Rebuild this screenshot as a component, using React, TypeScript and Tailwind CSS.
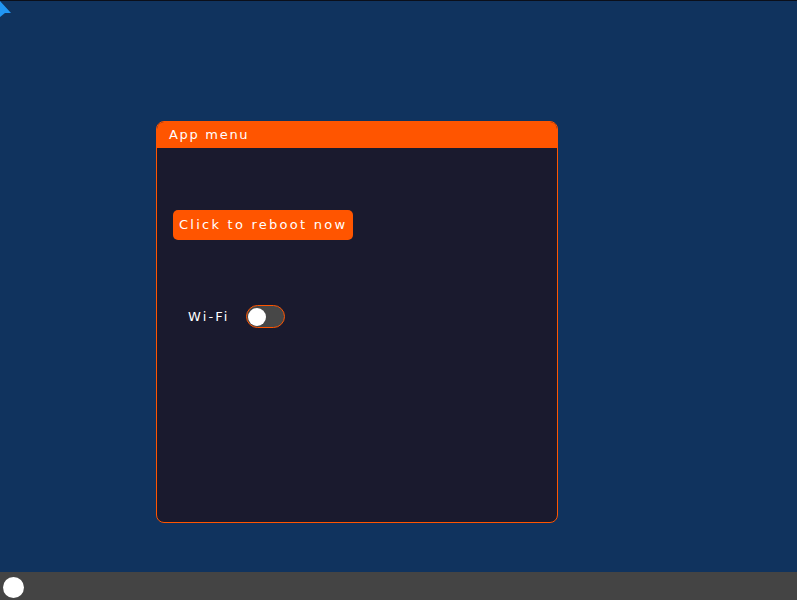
import React from "react";

export default function App() {
  const font = { fontFamily: '"DejaVu Sans", "Liberation Sans", sans-serif' };
  return (
    <div className="w-[797px] h-[600px] flex flex-col overflow-hidden bg-[#10335e]" style={font}>
      <div className="relative flex-1 border-t border-[#0b0f1a] pt-[120px] pl-[156px]">
        <svg className="absolute left-0 top-0" width="14" height="18" viewBox="0 0 14 18">
          <polygon points="0,0 11,12 5,12 0,16" fill="#2196f3" />
        </svg>
        <div className="w-[402px] h-[402px] rounded-[8px] border border-[#ff5500] bg-[#1a1a2e] flex flex-col overflow-hidden">
          <div className="h-[26px] bg-[#ff5500] flex items-center pl-[12px] text-white text-[13px] tracking-[1.7px]">
            App menu
          </div>
          <div className="flex flex-col pl-[16px] pt-[62px]">
            <button className="w-[180px] h-[30px] rounded-[5px] bg-[#ff5500] text-white text-[13px] tracking-[2.25px] flex items-center pl-[6px] whitespace-nowrap">
              Click to reboot now
            </button>
            <div className="flex items-center mt-[65px] pl-[15px] gap-[16px]">
              <span className="text-white text-[13px] tracking-[2.1px]">Wi-Fi</span>
              <div className="w-[39px] h-[23px] rounded-full border-[1.5px] border-[#ff5500] bg-[#474747] flex items-center pl-[1px]">
                <div className="w-[18px] h-[18px] rounded-full bg-white" />
              </div>
            </div>
          </div>
        </div>
      </div>
      <div className="h-[28px] bg-[#444444] flex items-start pt-[5px] pl-[3px]">
        <div className="w-[21px] h-[21px] rounded-full bg-white" />
      </div>
    </div>
  );
}
